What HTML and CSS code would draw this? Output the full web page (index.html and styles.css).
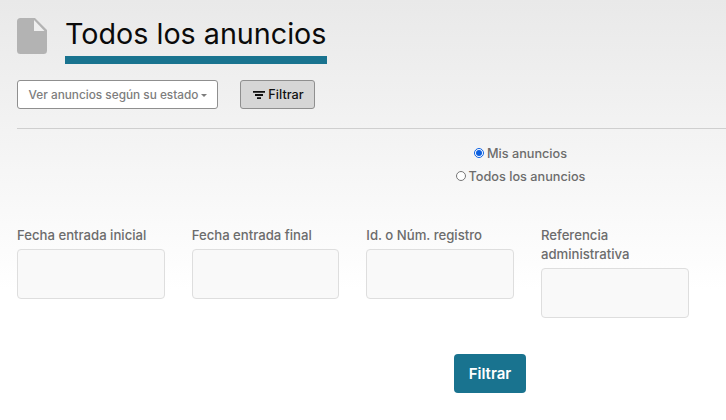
FILE: index.html
```html
<!DOCTYPE html>
<html lang="es">
<head>
<meta charset="utf-8">
<title>Todos los anuncios</title>
<link rel="stylesheet" href="styles.css">
</head>
<body>
<header class="head">
  <svg class="doc" width="30" height="36" viewBox="0 0 30 36"><path fill="#b3b3b3" d="M3.500 0H18L30 12V32.500A3.500 3.500 0 0 1 26.500 36H3.500A3.500 3.500 0 0 1 0 32.500V3.500A3.500 3.500 0 0 1 3.500 0Z"/><path fill="#efefef" d="M17 2 27.500 13H17Z"/></svg>
  <h1 class="title">Todos los anuncios</h1>
</header>
<div class="tools">
  <button class="state" type="button">Ver anuncios según su estado<span class="caret"></span></button>
  <button class="toggle" type="button"><svg width="12" height="8" viewBox="0 0 12 8"><path fill="#111" d="M0 0h12v1.800H0zM2 3.100h8v1.800H2zM4 6.200h4V8H4z"/></svg>Filtrar</button>
</div>
<hr class="rule">
<form class="filters">
  <div class="radios">
    <label class="radio"><input type="radio" name="scope" checked>Mis anuncios</label>
    <label class="radio"><input type="radio" name="scope">Todos los anuncios</label>
  </div>
  <div class="fields">
    <label class="field"><span>Fecha entrada inicial</span><input type="text"></label>
    <label class="field"><span>Fecha entrada final</span><input type="text"></label>
    <label class="field"><span>Id. o Núm. registro</span><input type="text"></label>
    <label class="field"><span>Referencia administrativa</span><input type="text"></label>
  </div>
  <button class="submit" type="button">Filtrar</button>
</form>
</body>
</html>
```
FILE: styles.css
```css
* { box-sizing: border-box; }
html, body { height: 100%; }
body {
  margin: 0;
  height: 420px;
  overflow: hidden;
  font-family: "Inter", "Liberation Sans", sans-serif;
  background: linear-gradient(#e9e9e9 0, #ffffff 290px);
  color: #6c6c6c;
}
.head {
  display: flex;
  align-items: flex-start;
  padding: 18px 0 0 17px;
  height: 80px;
}
.title {
  margin: 0 0 0 18px;
  height: 46px;
  border-bottom: 8px solid #19738f;
  font-size: 28.700px;
  line-height: 32px;
  font-weight: 400;
  color: #0a0a0a;
  white-space: nowrap;
  width: 262px;
}
.tools {
  display: flex;
  align-items: center;
  padding-left: 17px;
  gap: 22px;
}
.state {
  width: 201px;
  height: 29px;
  padding: 0 0 0 1px;
  background: #fff;
  border: 1px solid #8f8f8f;
  border-radius: 3px;
  font: 500 11.800px "Inter", sans-serif;
  color: #7d7d7d;
  white-space: nowrap;
}
.caret {
  display: inline-block;
  margin-left: 3px;
  vertical-align: 2px;
  border: 3px solid transparent;
  border-top-color: #7d7d7d;
  border-bottom-width: 0;
}
.toggle {
  display: flex;
  align-items: center;
  justify-content: center;
  gap: 3px;
  width: 75px;
  height: 29px;
  padding: 0 0 0 2px;
  background: #d6d6d6;
  border: 1px solid #8f8f8f;
  border-radius: 3px;
  font: 500 12.700px "Inter", sans-serif;
  color: #111;
}
.rule {
  margin: 19px 0 0 17px;
  border: 0;
  border-top: 1px solid #cfcfcf;
}
.radios {
  display: flex;
  flex-direction: column;
  align-items: center;
  margin: 15px 0 0 315px;
  gap: 5px;
}
.radio {
  display: flex;
  align-items: center;
  height: 18px;
  font-size: 12.700px;
  font-weight: 500;
  color: #6c6c6c;
}
.radio input {
  width: 10px;
  height: 10px;
  margin: 0 3px 0 0;
  accent-color: #0b5fe0;
}
.fields {
  display: grid;
  grid-template-columns: repeat(4, 147.670px);
  column-gap: 27px;
  align-items: start;
  margin: 41px 0 0 17px;
}
.field {
  display: flex;
  flex-direction: column;
  gap: 4px;
  font-size: 13.150px;
  line-height: 19px;
  font-weight: 500;
  color: #6c6c6c;
}
.field input {
  width: 100%;
  height: 50px;
  background: #f9f9f9;
  border: 1px solid #dedede;
  border-radius: 4px;
}
.submit {
  display: block;
  width: 72px;
  height: 39px;
  margin: 36px 0 0 454px;
  background: #19738f;
  border: 0;
  border-radius: 4px;
  font: 600 15px "Inter", sans-serif;
  color: #fff;
}
```
